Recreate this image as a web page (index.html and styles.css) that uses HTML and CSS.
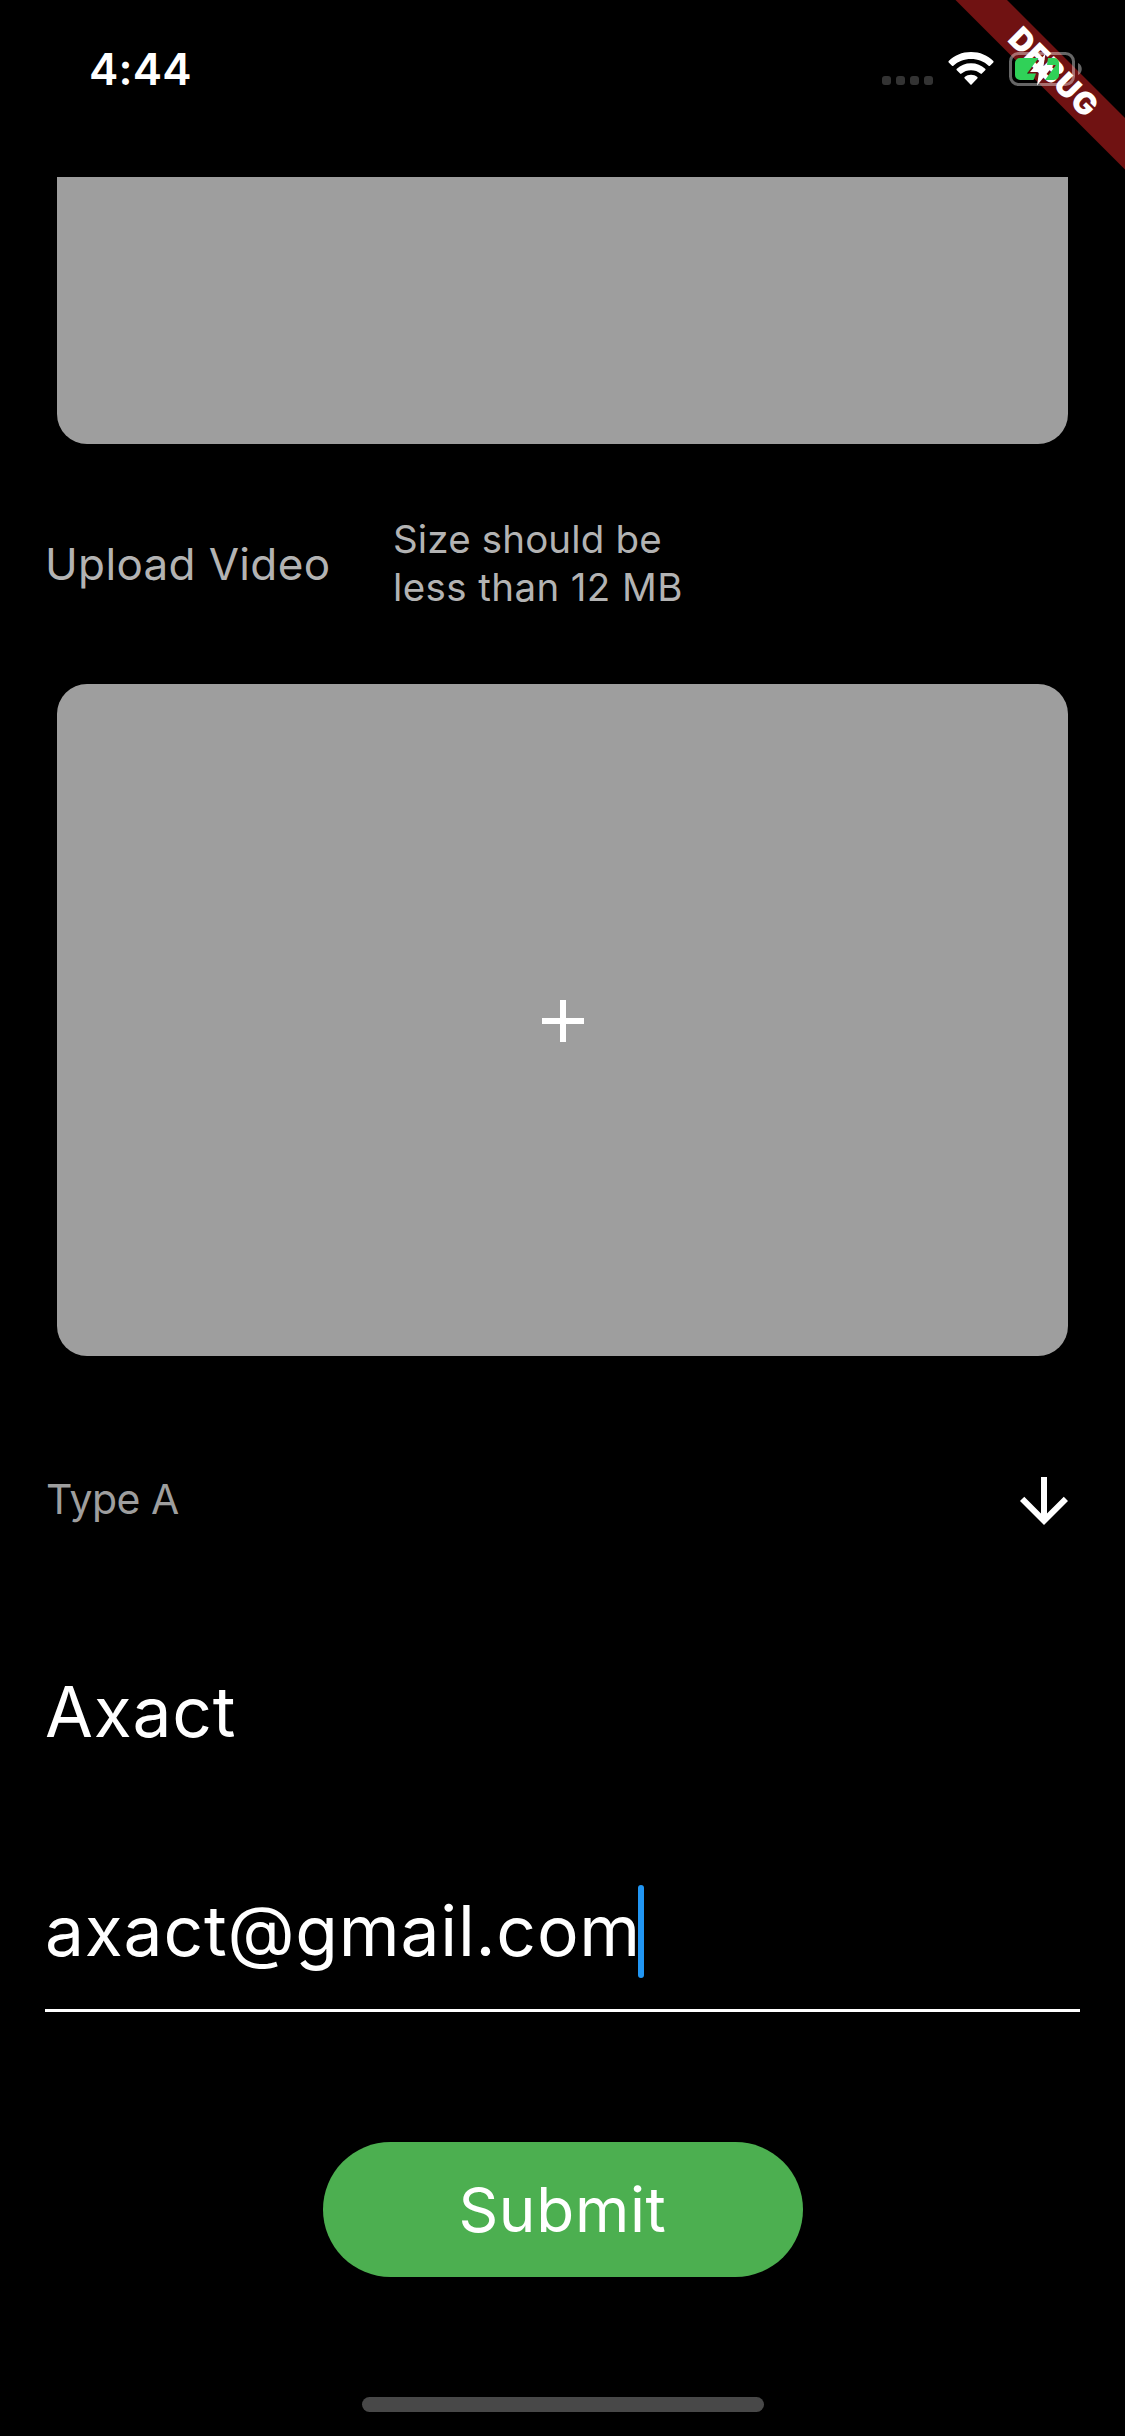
FILE: index.html
```html
<!DOCTYPE html>
<html lang="en">
<head>
<meta charset="utf-8">
<title>Upload</title>
<link rel="stylesheet" href="styles.css">
</head>
<body>
<div class="screen">
  <header class="status-bar">
    <span class="time">4:44</span>
    <div class="status-icons">
      <div class="dots"><i></i><i></i><i></i><i></i></div>
      <svg class="wifi" width="46" height="34" viewBox="0 0 46 34" fill="#fff">
        <path d="M23 0C31.900 0 39.800 3.400 45.300 9a1 1 0 0 1 0 1.400L42 13.700a1 1 0 0 1-1.400 0C36 9.200 29.900 6.900 23 6.900S10 9.200 5.400 13.700a1 1 0 0 1-1.400 0L.7 10.400a1 1 0 0 1 0-1.400C6.200 3.400 14.100 0 23 0Z"/>
        <path d="M23 11.300c5.500 0 10.500 2 14.200 5.500a1 1 0 0 1 0 1.500l-3.300 3.300a1 1 0 0 1-1.400 0C30 19.400 26.700 18.200 23 18.200s-7 1.200-9.500 3.400a1 1 0 0 1-1.400 0l-3.300-3.300a1 1 0 0 1 0-1.500C12.500 13.300 17.500 11.300 23 11.300Z"/>
        <path d="M23 22.700c2.400 0 4.600.8 6.300 2.300a1 1 0 0 1 0 1.500l-5.500 5.800a1 1 0 0 1-1.600 0l-5.500-5.800a1 1 0 0 1 0-1.500c1.700-1.500 3.900-2.300 6.300-2.300Z"/>
      </svg>
    </div>
  </header>

  <main class="form">
    <div class="card card-cut"></div>
    <div class="upload-row">
      <span class="upload-label">Upload Video</span>
      <span class="upload-hint"><span class="hint-top">Size should be</span><br>less than 12 MB</span>
    </div>
    <div class="card card-video">
      <svg class="plus" width="72" height="72" viewBox="0 0 24 24" fill="#fff"><path d="M19 13h-6v6h-2v-6H5v-2h6V5h2v6h6v2z"/></svg>
    </div>
    <div class="type-row">
      <span class="type-label">Type A</span>
      <svg width="72" height="72" viewBox="0 0 24 24" fill="#fff"><path d="M20 12l-1.410-1.410L13 16.170V4h-2v12.170l-5.580-5.590L4 12l8 8 8-8z"/></svg>
    </div>
    <div class="name-field"><span class="name-text">Axact</span></div>
    <div class="email-field"><span class="email-text">axact@gmail.com</span><span class="caret"></span></div>
    <button class="submit"><span class="submit-text">Submit</span></button>
  </main>
  <div class="home-indicator"></div>

  <svg class="debug-banner" width="180" height="180" viewBox="945 0 180 180">
    <path d="M955.500 0H1007L1125 118v51.500Z" fill="#701212"/>
    <text x="0" y="11" transform="translate(1053.500 72) rotate(45)" text-anchor="middle" textLength="111" fill="#fff">DEBUG</text>
  </svg>
  <svg class="battery" width="76" height="36" viewBox="1008 51 76 36">
    <rect x="1010.500" y="53.500" width="63" height="31" rx="8" fill="none" stroke="#fff" stroke-opacity=".4" stroke-width="3"/>
    <path d="M1078 63c5 2 5 10 0 12Z" fill="#fff" fill-opacity=".4"/>
    <path d="M1020 58H1038.500L1027 73.500H1036L1033.500 80H1020a5 5 0 0 1-5-5V63a5 5 0 0 1 5-5Z" fill="#30d158"/>
    <path d="M1048 58H1054a5 5 0 0 1 5 5V75a5 5 0 0 1-5 5H1045L1056 65H1047Z" fill="#30d158"/>
    <path d="M1045.500 53.500 1030 72H1039L1037 85.500 1053 66H1043.500Z" fill="#fff"/>
  </svg>
</div>
</body>
</html>
```
FILE: styles.css
```css
* { box-sizing: border-box; }
body { margin: 0; background: #000; }
.screen {
  position: relative;
  display: flex;
  flex-direction: column;
  align-items: center;
  width: 1125px;
  height: 2436px;
  overflow: hidden;
  background: #000;
  color: #fff;
  font-family: Inter, "Liberation Sans", sans-serif;
}
.status-bar {
  display: flex;
  justify-content: space-between;
  width: 100%;
  height: 177px;
  padding: 43px 131px 0 89px;
}
.time { font-size: 44px; font-weight: 600; line-height: 52px; letter-spacing: 0.2px; }
.status-icons { display: flex; gap: 15px; padding-top: 9px; }
.dots { display: flex; gap: 5px; padding-top: 24px; }
.dots i { width: 9px; height: 9px; border-radius: 3px; background: #333; }
.form { display: flex; flex-direction: column; width: 1035px; }
.card { margin: 0 12px; background: #9e9e9e; }
.card-cut { height: 267px; border-radius: 0 0 30px 30px; }
.upload-row { display: flex; align-items: center; height: 240px; }
.upload-label { width: 348px; font-size: 44px; letter-spacing: 0.35px; color: #b3b3b3; white-space: nowrap; }
.upload-hint { padding-bottom: 2px; font-size: 38.500px; line-height: 48px; letter-spacing: 0.4px; color: #b3b3b3; white-space: nowrap; }
.hint-top { letter-spacing: 0.15px; }
.card-video {
  display: flex;
  align-items: center;
  justify-content: center;
  height: 672px;
  padding-top: 2px;
  border-radius: 30px;
}
.type-row { display: flex; align-items: center; justify-content: space-between; height: 288px; padding-top: 1px; }
.type-label { padding: 0 0 3px 1px; font-size: 41px; letter-spacing: -0.5px; color: #9e9e9e; }
.name-field { display: flex; align-items: center; height: 136px; }
.name-text, .email-text { font-size: 69.500px; letter-spacing: 0.8px; }
.email-text { padding-bottom: 2px; }
.email-field {
  display: flex;
  align-items: center;
  height: 162px;
  margin-top: 70px;
  padding: 35px 0 31px;
  border-bottom: 3px solid #fff;
}
.caret { width: 6px; height: 93px; margin-left: -3px; border-radius: 3px; background: #2196f3; }
.submit {
  align-self: center;
  width: 480px;
  height: 135px;
  margin: 130px 0 0;
  padding: 0;
  border: 0;
  border-radius: 68px;
  background: #4caf50;
  color: #fff;
  font: 400 62px/74px Inter, "Liberation Sans", sans-serif;
  letter-spacing: 0.7px;
}
.home-indicator { width: 402px; height: 15px; margin-top: 120px; border-radius: 8px; background: #484848; }
.debug-banner { position: absolute; top: 0; right: 0; font: 900 31px Inter, sans-serif; }
.battery { position: absolute; top: 51px; left: 1008px; }
```
